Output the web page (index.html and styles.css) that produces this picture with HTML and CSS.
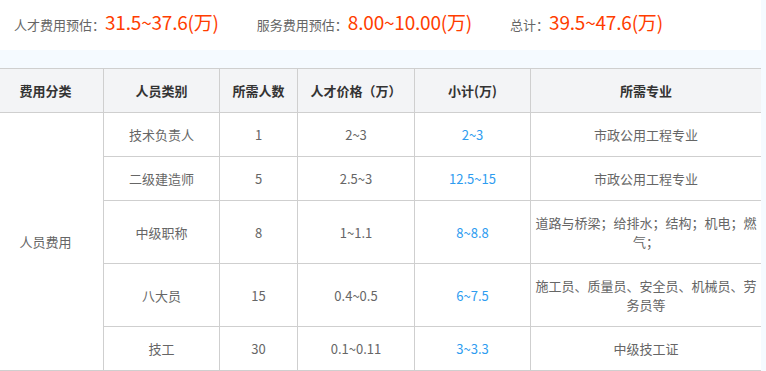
FILE: index.html
```html
<!DOCTYPE html>
<html lang="zh-CN">
<head>
<meta charset="utf-8">
<title>费用预估</title>
<link rel="stylesheet" href="styles.css">
</head>
<body>
<div class="page">
  <div class="summary">
    <div class="sum-item"><span class="sum-label">人才费用预估：</span><span class="sum-value">31.5~37.6(万)</span></div>
    <div class="sum-item"><span class="sum-label">服务费用预估：</span><span class="sum-value">8.00~10.00(万)</span></div>
    <div class="sum-item"><span class="sum-label">总计：</span><span class="sum-value">39.5~47.6(万)</span></div>
  </div>
  <div class="table-wrap">
  <table class="fee-table">
    <colgroup>
      <col class="c1"><col class="c2"><col class="c3"><col class="c4"><col class="c5"><col class="c6">
    </colgroup>
    <thead>
      <tr>
        <th class="first">费用分类</th>
        <th>人员类别</th>
        <th>所需人数</th>
        <th>人才价格（万）</th>
        <th>小计(万)</th>
        <th>所需专业</th>
      </tr>
    </thead>
    <tbody>
      <tr>
        <td class="first" rowspan="5">人员费用</td>
        <td>技术负责人</td>
        <td>1</td>
        <td>2~3</td>
        <td class="sub">2~3</td>
        <td>市政公用工程专业</td>
      </tr>
      <tr>
        <td>二级建造师</td>
        <td>5</td>
        <td>2.5~3</td>
        <td class="sub">12.5~15</td>
        <td>市政公用工程专业</td>
      </tr>
      <tr>
        <td>中级职称</td>
        <td>8</td>
        <td>1~1.1</td>
        <td class="sub">8~8.8</td>
        <td>道路与桥梁；给排水；结构；机电；燃气；</td>
      </tr>
      <tr>
        <td>八大员</td>
        <td>15</td>
        <td>0.4~0.5</td>
        <td class="sub">6~7.5</td>
        <td>施工员、质量员、安全员、机械员、劳务员等</td>
      </tr>
      <tr>
        <td>技工</td>
        <td>30</td>
        <td>0.1~0.11</td>
        <td class="sub">3~3.3</td>
        <td>中级技工证</td>
      </tr>
    </tbody>
  </table>
  </div>
</div>
</body>
</html>
```
FILE: styles.css
```css
html, body {
  margin: 0;
  padding: 0;
  background: #f5faff;
}
body {
  font-family: "Noto Sans CJK SC", "Noto Sans", sans-serif;
  color: #666;
}
.page {
  width: 761px;
  overflow: hidden;
}
.summary {
  background: #fff;
  height: 50px;
  box-sizing: border-box;
  padding: 8px 0 0 14px;
  display: flex;
  align-items: baseline;
  gap: 38px;
}
.sum-item {
  display: flex;
  align-items: baseline;
}
.sum-label {
  font-size: 13px;
  color: #666;
}
.sum-value {
  font-size: 19px;
  color: #ff3d00;
  letter-spacing: -0.2px;
}
.table-wrap {
  margin-top: 18px;
  margin-left: -13px;
}
.fee-table {
  width: 774px;
  border-collapse: collapse;
  table-layout: fixed;
  background: #fff;
  font-size: 13px;
  line-height: 19px;
}
.c1 { width: 116px; }
.c2 { width: 116px; }
.c3 { width: 78px; }
.c4 { width: 117px; }
.c5 { width: 116px; }
.c6 { width: 231px; }
.fee-table th,
.fee-table td {
  border: 1px solid #cfcfcf;
  padding: 12px 4px;
  text-align: center;
  vertical-align: middle;
}
.fee-table th {
  background: #f3f4f6;
  color: #333;
  font-weight: bold;
}
.fee-table td {
  color: #666;
}
.fee-table td.sub {
  color: #2e9cf0;
}
```
